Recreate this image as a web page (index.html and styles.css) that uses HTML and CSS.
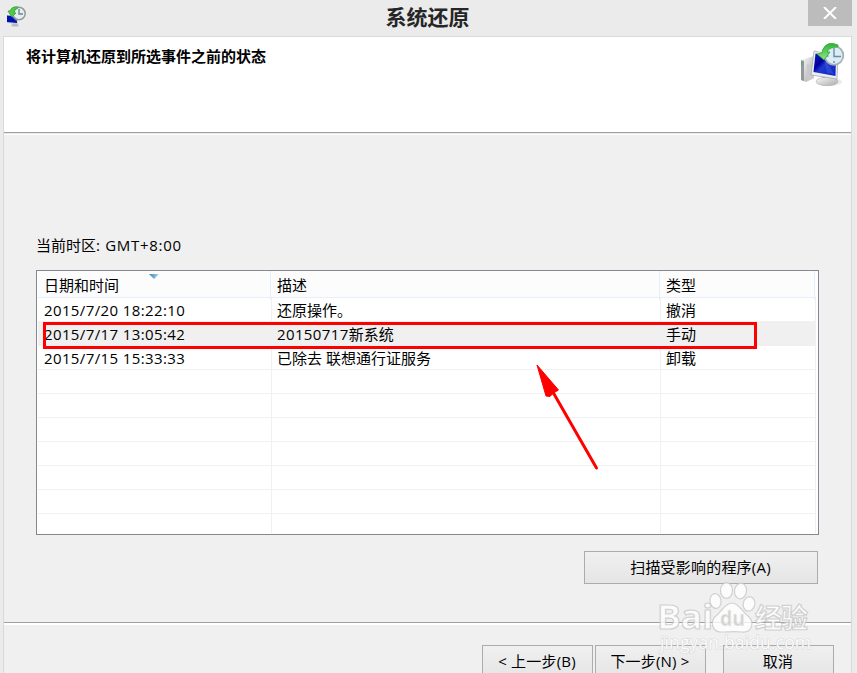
FILE: index.html
```html
<!DOCTYPE html>
<html lang="zh-CN">
<head>
<meta charset="utf-8">
<title>系统还原</title>
<link rel="stylesheet" href="styles.css">
</head>
<body>
<div class="window">
  <svg width="0" height="0" class="defs" aria-hidden="true">
    <defs>
      <linearGradient id="screen" x2="1" y2="1"><stop offset="0" stop-color="#0a1fb8"/><stop offset=".35" stop-color="#0000a0"/><stop offset=".5" stop-color="#2038cc"/><stop offset="1" stop-color="#1024c8"/></linearGradient>
      <linearGradient id="metal" x2="1" y2="1"><stop stop-color="#fafafa"/><stop offset="1" stop-color="#aaa"/></linearGradient>
      <linearGradient id="green" x2="0" y2="1"><stop stop-color="#2fb43b"/><stop offset="1" stop-color="#8de77d"/></linearGradient>
      <linearGradient id="sort" x2="1"><stop stop-color="#3c7fb1"/><stop offset="1" stop-color="#a9d9f2"/></linearGradient>
    </defs>
  </svg>
  <header class="titlebar">
    <svg class="app-icon" width="20" height="21" viewBox="0 0 20 21">
      <path d="M5 20l2-3h4l2 3q-4 1-8 0z" fill="#b8bcbc"/>
      <path d="M1 9l10 1 1 8-11-1z" fill="#c8d0d8"/><path d="M1 9.500l10 1v6.500l-10-1z" fill="#0010b0"/><path d="M5 10l6 1v5z" fill="#3660d0"/>
      <circle cx="13" cy="7.500" r="6.200" fill="#e4eeee" stroke="#929b9b" stroke-width="1.500"/>
      <path d="M13 3v5h4" fill="none" stroke="#6b8590" stroke-width="1.400"/>
      <path d="M12 1Q6 0 4 5H2l4 6 4-4H8q0-4 4-5z" fill="#4fc947" stroke="#42a843"/>
    </svg>
    <h1>系统还原</h1>
    <button class="close" aria-label="关闭"><svg width="14" height="12" viewBox="0 0 14 12"><path d="M1 0l12 12M13 0L1 12" stroke="#fff" stroke-width="2"/></svg></button>
  </header>
  <main class="panel">
    <section class="heading">
      <h2>将计算机还原到所选事件之前的状态</h2>
      <svg class="restore-icon" width="46" height="46" viewBox="0 0 46 46">
        <ellipse cx="30" cy="40" rx="13" ry="4" fill="#d8d8d8" opacity=".5"/>
        <path d="M2 18l13-4v22L7 40l-5-2z" fill="url(#metal)"/><path d="M2 18l3 1v20l-3-1z" fill="#92999b"/><path d="M3 20v3" stroke="#36b843"/>
        <path d="M8 22l7 2v12l-7 3z" fill="#cacaca"/>
        <path d="M23 32l8 2 2 5h-9z" fill="#a5a5a5"/><ellipse cx="28" cy="39.500" rx="11" ry="4.200" fill="url(#metal)" stroke="#a9a9a9" stroke-width=".5"/>
        <path d="M15 9l24 5-1 23-26-4z" fill="#e9eeee" stroke="#9da5a5" stroke-width=".7"/>
        <path d="M16.500 11.500l20.500 4-.5 18.500-22-4z" fill="url(#screen)"/><path d="M24 13l11 19-7-1z" fill="#4866e0" opacity=".4"/>
        <circle cx="35" cy="13.500" r="9.300" fill="#dceef5" stroke="#a8b0b2" stroke-width="1.800"/>
        <path d="M35 6v8.500h7M28 14h1.500M35 21v-2" fill="none" stroke="#6f8ba2" stroke-width="1.400"/>
        <path d="M39 3Q28-2 23.500 8l-.5 3-5 1 7 6 6-8h-3q2-5 11-5z" fill="url(#green)" stroke="#30a53a" stroke-width=".8"/>
      </svg>
    </section>
    <section class="content">
      <p class="zone">当前时区<span class="zone-value">: GMT+8:00</span></p>
      <div class="list">
        <div class="row head"><span>日期和时间<svg class="sort" width="10" height="5" viewBox="0 0 10 5"><path d="M0 0h10L5 5z" fill="url(#sort)"/></svg></span><span>描述</span><span>类型</span></div>
        <div class="row"><span class="num">2015/7/20 18:22:10</span><span>还原操作。</span><span>撤消</span></div>
        <div class="row selected"><span class="num">2015/7/17 13:05:42</span><span><b class="num">20150717</b>新系统</span><span>手动</span></div>
        <div class="row"><span class="num">2015/7/15 15:33:33</span><span>已除去 联想通行证服务</span><span>卸载</span></div>
        <div class="row"><span></span><span></span><span></span></div>
        <div class="row"><span></span><span></span><span></span></div>
        <div class="row"><span></span><span></span><span></span></div>
        <div class="row"><span></span><span></span><span></span></div>
        <div class="row"><span></span><span></span><span></span></div>
        <div class="row"><span></span><span></span><span></span></div>
        <div class="row last"><span></span><span></span><span></span></div>
        <div class="mark"></div>
      </div>
      <button class="btn scan">扫描受影响的程序(A)</button>
    </section>
    <footer class="actions">
      <button class="btn">&lt; 上一步(B)</button>
      <button class="btn">下一步(N) &gt;</button>
      <button class="btn cancel">取消</button>
    </footer>
  </main>
  <svg class="arrow" width="70" height="112" viewBox="0 0 70 112"><path d="M15 27l46.500 81" stroke="#f00" stroke-width="3" stroke-linecap="round"/><path d="M2 5L23.500 30l-5 3-3.500 3.500-4-.5z" fill="#f00" stroke="#f00" stroke-linejoin="round"/></svg>
  <svg class="watermark" width="170" height="90" viewBox="0 0 170 90">
    <g class="wm-shape">
      <ellipse cx="64.500" cy="30" rx="5.500" ry="7.500" transform="rotate(-8 64.500 30)"/>
      <ellipse cx="75.500" cy="19.500" rx="6" ry="7.800"/>
      <ellipse cx="89.500" cy="20" rx="6" ry="7.800" transform="rotate(8 89.500 20)"/>
      <ellipse cx="98" cy="33" rx="5.800" ry="7.200" transform="rotate(12 98 33)"/>
      <path d="M81 32c-7 0-10 8-15 12-8 6-5 17 4 17 7 0 14-1 21 0 10 1 13-10 6-16-6-4-9-13-16-13z"/>
      <text class="wm-brand" x="6" y="58" textLength="56" lengthAdjust="spacingAndGlyphs">Bai</text>
      <text class="wm-cn" x="104" y="57" textLength="53">经验</text>
    </g>
    <text class="wm-du" x="69" y="55" textLength="25" lengthAdjust="spacingAndGlyphs">du</text>
    <text class="wm-url" x="9" y="78" textLength="151">jingyan.baidu.com</text>
  </svg>
</div>
</body>
</html>
```
FILE: styles.css
```css
* { box-sizing: border-box; }
body { margin: 0; overflow: hidden; }
.window {
  position: relative;
  width: 857px;
  height: 673px;
  overflow: hidden;
  padding: 0 5px 0 3px;
  background: #ebebeb;
  color: #000;
  font: 15px/24px "Open Sans", "Noto Sans CJK SC", sans-serif;
}
.defs { position: absolute; }
h1, h2, p { margin: 0; }
button { font: inherit; color: inherit; padding: 0; }
.titlebar {
  height: 36px;
  display: grid;
  grid-template-columns: 44px 1fr 44px;
  align-items: start;
}
.app-icon { margin: 6px 0 0 3px; }
h1 {
  text-align: center;
  font: bold 21px/32px "Noto Sans CJK SC", sans-serif;
  color: #262626;
}
.close {
  width: 44px;
  height: 26px;
  border: 0;
  background: #bcbcbc;
  display: flex;
  align-items: center;
  justify-content: center;
}
.panel {
  width: 849px;
  height: 637px;
  border: 1px solid #dadada;
  border-bottom: 0;
  background: #f0f0f0;
}
.heading {
  height: 98px;
  background: #fff;
  border-bottom: 1px solid #fff;
  box-shadow: inset 0 -1px #e9e9e9, inset 0 -2px #a0a0a0;
  display: flex;
  justify-content: space-between;
  padding: 5px 6px 0 22px;
}
h2 { font: bold 15px/28px "Noto Sans CJK SC", sans-serif; }
.content { height: 487px; padding: 98px 32px 0; }
.zone { height: 37px; line-height: 24px; }
.list {
  position: relative;
  width: 783px;
  height: 265px;
  border: 1px solid #828790;
  background: #fff;
  padding: 0 2px 0 1px;
}
.row {
  display: grid;
  grid-template-columns: 234px 389px 155px;
  height: 24px;
  border-bottom: 1px solid #f0f0f0;
}
.row > span {
  border-right: 1px solid #f0f0f0;
  padding-left: 5px;
  white-space: pre;
}
.row > span:first-child { padding-left: 6px; }
.row.head {
  grid-template-columns: 233px 389px 155px;
  height: 27px;
  background: #fcfcfc;
  border-color: #e5f0fa;
  line-height: 29px;
}
.row.head > span { position: relative; border-color: #e5f0fa; padding-left: 6px; }
.sort { position: absolute; left: 111px; top: 3px; }
.row.selected { background: #f0f0f0; }
.row.last { height: 19px; border: 0; }
.num { font-weight: normal; letter-spacing: 0.38px; }
.zone-value { letter-spacing: 0.7px; }
.mark {
  position: absolute;
  left: 6px;
  top: 51px;
  width: 714px;
  height: 27px;
  border: 3px solid #f00;
}
.btn {
  width: 111px;
  height: 33px;
  padding: 0 1px 2px 0;
  border: 1px solid #acacac;
  background: linear-gradient(#f0f0f0, #e5e5e5);
  white-space: pre;
  letter-spacing: 0.2px;
}
.scan { display: block; width: 234px; margin: 16px 0 0 548px; }
.actions {
  height: 60px;
  display: flex;
  gap: 2px;
  padding: 23px 0 0 478px;
  box-shadow: inset 0 1px #a0a0a0, inset 0 3px #fff;
}
.cancel { margin-left: 15px; }
.arrow { position: absolute; left: 535px; top: 360px; }
.watermark { position: absolute; left: 651px; top: 571px; }
.wm-shape { fill: #fff; fill-opacity: .8; stroke: #c4c4c4; stroke-opacity: .75; stroke-width: 1.2; }
.wm-brand { font: bold 34px "Open Sans", sans-serif; }
.wm-cn { font: bold 27px "Noto Sans CJK SC", sans-serif; }
.wm-du { font: bold 22px "Open Sans", sans-serif; fill: #d4d4d4; stroke: #f6f6f6; stroke-width: .4; }
.wm-url { font: 17.5px "Open Sans", sans-serif; fill: #fff; fill-opacity: .9; stroke: #c8c8c8; stroke-width: 1.2; stroke-opacity: .6; paint-order: stroke; }
```
